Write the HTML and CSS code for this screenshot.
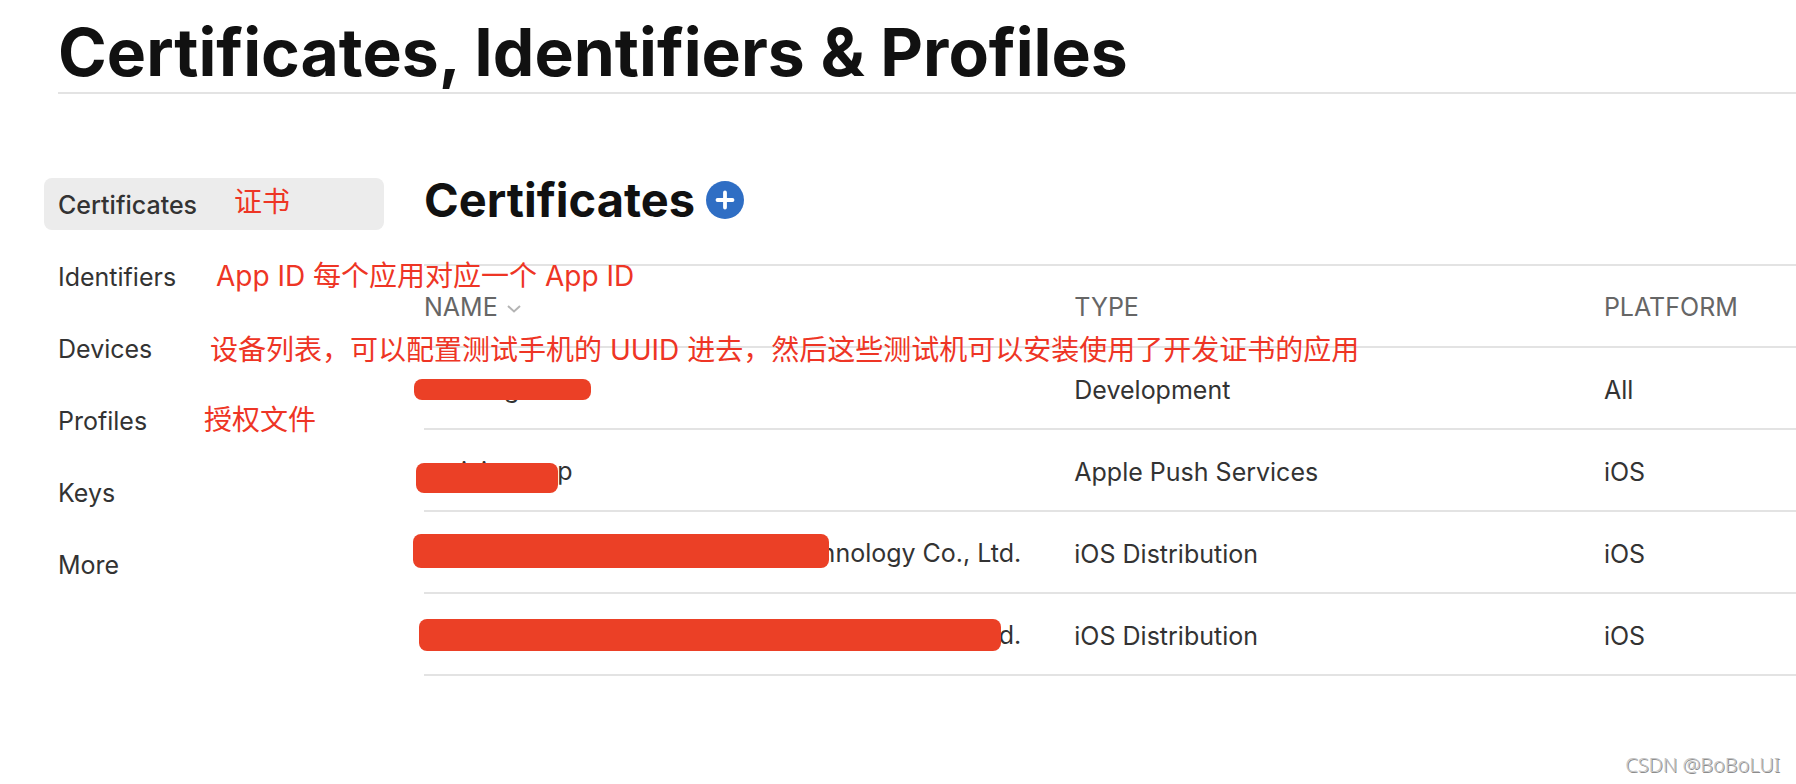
FILE: index.html
```html
<!DOCTYPE html>
<html lang="en">
<head>
<meta charset="utf-8">
<title>Certificates, Identifiers &amp; Profiles</title>
<link rel="stylesheet" href="styles.css">
</head>
<body>
<header class="page-header">
  <h1 class="page-title">Certificates, Identifiers &amp; Profiles</h1>
</header>
<div class="layout">
  <nav class="sidebar">
    <ul class="menu">
      <li class="menu-item"><a class="menu-link is-active" href="#">Certificates</a><span class="note note-certificates" lang="zh">证书</span></li>
      <li class="menu-item"><a class="menu-link" href="#">Identifiers</a><span class="note note-identifiers" lang="zh">App ID 每个应用对应一个 App ID</span></li>
      <li class="menu-item"><a class="menu-link" href="#">Devices</a><span class="note note-devices" lang="zh">设备列表，可以配置测试手机的 UUID 进去，然后这些测试机可以安装使用了开发证书的应用</span></li>
      <li class="menu-item"><a class="menu-link" href="#">Profiles</a><span class="note note-profiles" lang="zh">授权文件</span></li>
      <li class="menu-item"><a class="menu-link" href="#">Keys</a></li>
      <li class="menu-item"><a class="menu-link" href="#">More</a></li>
    </ul>
  </nav>
  <main class="content">
    <div class="section-head">
      <h2 class="section-title">Certificates</h2>
      <button class="add-button" type="button" aria-label="Add certificate">
        <svg class="add-icon" viewBox="0 0 38 38" aria-hidden="true"><circle cx="19" cy="19" r="19" fill="#2f6ec4"/><path d="M19 11.500v15M11.500 19h15" stroke="#fff" stroke-width="3.8" stroke-linecap="round"/></svg>
      </button>
    </div>
    <table class="certs">
      <thead>
        <tr>
          <th class="col-name" scope="col"><button class="sort" type="button">NAME<svg class="sort-icon" viewBox="0 0 14 8" aria-hidden="true"><path d="M1 1l6 5.500L13 1" fill="none" stroke="#b4b4b4" stroke-width="2"/></svg></button></th>
          <th class="col-type" scope="col">TYPE</th>
          <th scope="col">PLATFORM</th>
        </tr>
      </thead>
      <tbody>
        <tr><td class="name"><div class="name-text name-dev">g</div><span class="mask mask-dev"></span></td><td>Development</td><td>All</td></tr>
        <tr><td class="name"><div class="name-text name-push"><span>i</span><span>i</span><span class="last">p</span></div><span class="mask mask-push"></span></td><td>Apple Push Services</td><td>iOS</td></tr>
        <tr><td class="name"><div class="name-text name-dist">hnology Co., Ltd.</div><span class="mask mask-dist"></span></td><td>iOS Distribution</td><td>iOS</td></tr>
        <tr><td class="name"><div class="name-text name-dist">d.</div><span class="mask mask-dist-long"></span></td><td>iOS Distribution</td><td>iOS</td></tr>
      </tbody>
    </table>
  </main>
</div>
<footer class="watermark">CSDN @BoBoLUI</footer>
</body>
</html>
```
FILE: styles.css
```css
* { box-sizing: border-box; }

body {
  margin: 0;
  min-height: 100vh;
  display: flex;
  flex-direction: column;
  overflow-x: hidden;
  background: #fff;
  color: #333;
  font: 25px/32px Inter, "Noto Sans CJK SC", sans-serif;
}

.page-header {
  margin-left: 58px;
  padding: 12px 0 0;
  border-bottom: 2px solid #e3e3e3;
}

.page-title {
  margin: 0;
  color: #111;
  font-size: 66px;
  font-weight: 700;
  line-height: 80px;
}

.layout {
  display: flex;
  gap: 40px;
  padding: 84px 0 0 44px;
}

.sidebar { flex: 0 0 340px; }

.menu {
  display: flex;
  flex-direction: column;
  gap: 20px;
  margin: 0;
  padding: 0;
  list-style: none;
}

.menu-item { position: relative; }

.menu-link {
  display: block;
  padding: 11px 14px 9px;
  border-radius: 8px;
  color: #333;
  text-decoration: none;
}

.menu-link.is-active { background: #ececec; font-weight: 500; }

.note {
  position: absolute;
  z-index: 2;
  top: 6px;
  color: #ee3525;
  font-size: 28px;
  line-height: 40px;
  white-space: nowrap;
}

.note-certificates { left: 190px; top: 4px; }
.note-identifiers { left: 172px; }
.note-devices { left: 166px; top: 8px; }
.note-profiles { left: 160px; }

.content { flex: 1; min-width: 0; }

.section-head {
  display: flex;
  align-items: center;
  gap: 11px;
  height: 44px;
  margin-bottom: 42px;
}

.section-title {
  margin: 0;
  color: #111;
  font-size: 47px;
  font-weight: 700;
  line-height: 44px;
}

.add-button,
.sort {
  display: flex;
  align-items: center;
  margin: 0;
  padding: 0;
  border: 0;
  background: none;
  color: inherit;
  font: inherit;
}

.add-icon { display: block; width: 38px; height: 38px; }

.certs {
  width: 100%;
  table-layout: fixed;
  border-collapse: separate;
  border-spacing: 0;
  border-top: 2px solid #e3e3e3;
}

.certs th,
.certs td {
  height: 82px;
  padding: 4px 0 0;
  border-bottom: 2px solid #e3e3e3;
  text-align: left;
  vertical-align: middle;
  font-weight: 400;
}

.certs th { padding-top: 2px; color: #666; }

.col-name { width: 47.4%; }
.col-type { width: 38.6%; }

.sort { gap: 9px; }
.sort-icon { width: 14px; height: 8px; margin-top: 4px; }

.certs .name { position: relative; padding: 2px 0 0; }

.name-text { display: flex; }
.name-dev { padding-left: 80px; }
.name-push { gap: 14px; padding-left: 37px; }
.name-push .last { margin-left: 56px; }
.name-dist { justify-content: flex-end; padding-right: 53px; }

.mask {
  position: absolute;
  border-radius: 8px;
  background: #eb4026;
}

.mask-dev { left: -10px; top: 31px; width: 177px; height: 21px; }
.mask-push { left: -8px; top: 33px; width: 142px; height: 30px; }
.mask-dist { left: -11px; top: 22px; width: 416px; height: 34px; }
.mask-dist-long { left: -5px; top: 25px; width: 582px; height: 32px; }

.watermark {
  margin-top: auto;
  padding: 0 16px 5px;
  color: #c4c4c4;
  font: 300 20px/28px "Noto Sans", sans-serif;
  text-align: right;
  text-shadow: 1px 1px 0 #8c8c8c;
}
```
